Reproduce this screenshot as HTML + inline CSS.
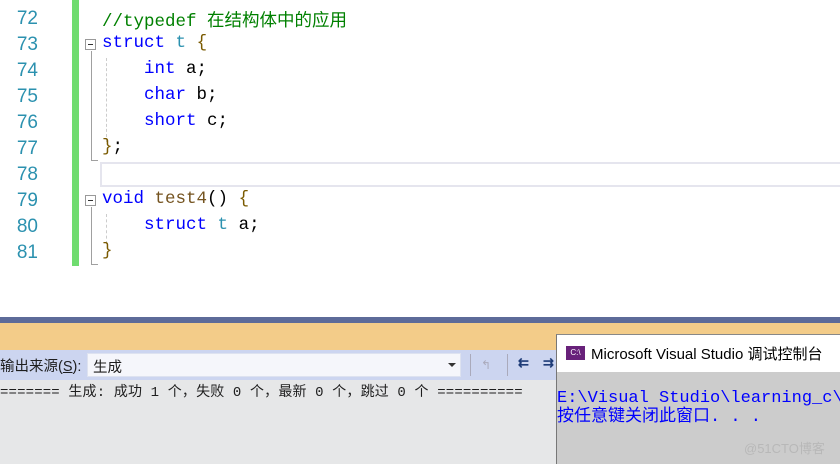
<!DOCTYPE html>
<html><head><meta charset="utf-8"><style>
*{margin:0;padding:0;box-sizing:border-box}
body{width:840px;height:464px;overflow:hidden;background:#fff;position:relative;font-family:"Liberation Sans","Noto Sans CJK SC",sans-serif}
.ln{position:absolute;left:0;width:38px;text-align:right;color:#2b91af;font:19px "Liberation Sans",sans-serif;}
.code{position:absolute;left:102px;font:17.5px "Liberation Mono","Noto Sans CJK SC",monospace;white-space:pre;color:#000;margin-top:-1px}
.k{color:#0000ff}.t{color:#2b91af}.c{color:#008000}.f{color:#74531f}.b{color:#7a5a00}
.box{position:absolute;width:11px;height:11px;border:1px solid #999;background:#fff}
.box:after{content:"";position:absolute;left:2px;top:4px;width:5px;height:1px;background:#333}
.vl{position:absolute;border-left:1px solid #a0a0a0}
.dl{position:absolute;border-left:1px dashed #ccc}
.mono{font-family:"Liberation Mono","Noto Sans CJK SC",monospace;white-space:pre}
</style></head><body>
<div style="position:absolute;left:72px;top:0;width:7px;height:266px;background:#6fdc6f"></div>
<div style="position:absolute;left:100px;top:162px;width:740px;height:25px;border:2px solid #e5e5ee;border-right:none"></div>
<div class="ln" style="top:8px">72</div>
<div class="ln" style="top:34px">73</div>
<div class="ln" style="top:60px">74</div>
<div class="ln" style="top:86px">75</div>
<div class="ln" style="top:112px">76</div>
<div class="ln" style="top:138px">77</div>
<div class="ln" style="top:164px">78</div>
<div class="ln" style="top:190px">79</div>
<div class="ln" style="top:216px">80</div>
<div class="ln" style="top:242px">81</div>
<div class="box" style="left:85px;top:39px"></div>
<div class="vl" style="left:91px;top:51px;height:110px"></div>
<div style="position:absolute;left:91px;top:160px;width:7px;border-top:1px solid #a0a0a0"></div>
<div class="dl" style="left:106px;top:58px;height:84px"></div>
<div class="box" style="left:85px;top:195px"></div>
<div class="vl" style="left:91px;top:207px;height:58px"></div>
<div style="position:absolute;left:91px;top:264px;width:7px;border-top:1px solid #a0a0a0"></div>
<div class="dl" style="left:106px;top:214px;height:30px"></div>
<div class="code" style="top:8px"><span class="c">//typedef 在结构体中的应用</span></div>
<div class="code" style="top:34px"><span class="k">struct</span> <span class="t">t</span> <span class="b">{</span></div>
<div class="code" style="top:60px">    <span class="k">int</span> a;</div>
<div class="code" style="top:86px">    <span class="k">char</span> b;</div>
<div class="code" style="top:112px">    <span class="k">short</span> c;</div>
<div class="code" style="top:138px"><span class="b">}</span>;</div>
<div class="code" style="top:190px"><span class="k">void</span> <span class="f">test4</span>() <span class="b">{</span></div>
<div class="code" style="top:216px">    <span class="k">struct</span> <span class="t">t</span> a;</div>
<div class="code" style="top:242px"><span class="b">}</span></div>

<div style="position:absolute;left:0;top:317px;width:840px;height:6px;background:#5d6b99"></div>
<div style="position:absolute;left:0;top:323px;width:840px;height:27px;background:#f3cc89"></div>
<div style="position:absolute;left:0;top:350px;width:840px;height:30px;background:#ccd5f0"></div>
<div style="position:absolute;left:0;top:380px;width:840px;height:84px;background:#e6e7e8"></div>
<div style="position:absolute;left:0;top:355px;font-size:14.5px;color:#1e1e1e">输出来源(<u>S</u>):</div>
<div style="position:absolute;left:87px;top:353px;width:374px;height:24px;background:#f5f6fb;border:1px solid #dde2f0;font-size:14.5px;padding:2px 5px;color:#1e1e1e">生成</div>
<div style="position:absolute;left:448px;top:363px;border-left:4px solid transparent;border-right:4px solid transparent;border-top:4px solid #333"></div>
<div style="position:absolute;left:470px;top:354px;height:22px;border-left:1px solid #aab"></div>
<div style="position:absolute;left:481px;top:358px;width:16px;height:14px;color:#aab;font-size:12px">↰</div>
<div style="position:absolute;left:507px;top:354px;height:22px;border-left:1px solid #aab"></div>
<div style="position:absolute;left:518px;top:355px;font-size:13px;color:#1e3c78;font-weight:bold">⇇</div>
<div style="position:absolute;left:543px;top:355px;font-size:13px;color:#1e3c78;font-weight:bold">⇉</div>
<div class="mono" style="position:absolute;left:0;top:381px;font-size:14px;letter-spacing:0.15px;color:#1e1e1e">======= 生成: 成功 1 个，失败 0 个，最新 0 个，跳过 0 个 ==========</div>

<div style="position:absolute;left:556px;top:334px;width:284px;height:130px;background:#cccccc;border-left:1px solid #777;border-top:1px solid #888"></div>
<div style="position:absolute;left:557px;top:335px;width:283px;height:37px;background:#fff"></div>
<div style="position:absolute;left:566px;top:346px;width:19px;height:14px;background:#68217a;color:#fff;font-size:8px;line-height:14px;text-align:center">C:\</div>
<div style="position:absolute;left:591px;top:343px;font-size:15px;color:#000;white-space:nowrap">Microsoft Visual Studio 调试控制台</div>
<div class="mono" style="position:absolute;left:557px;top:389px;font-size:17px;line-height:19px;color:#0000ff">E:\Visual Studio\learning_c\t
按任意键关闭此窗口. . .</div>
<div style="position:absolute;left:744px;top:438px;font-size:13px;color:#b8b8b8">@51CTO博客</div>
</body></html>
